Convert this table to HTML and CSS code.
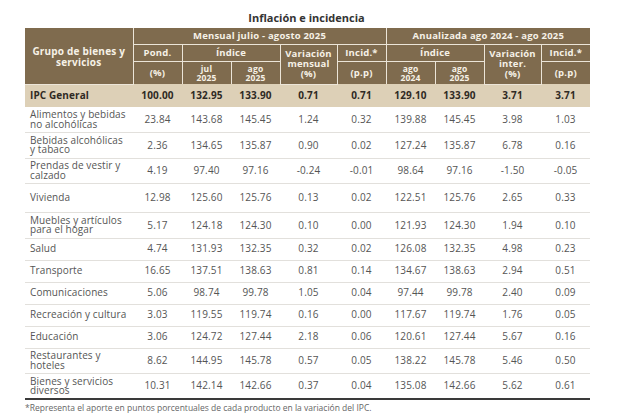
FILE: index.html
```html
<!DOCTYPE html>
<html lang="es">
<head>
<meta charset="utf-8">
<title>Inflación e incidencia</title>
<link rel="stylesheet" href="styles.css">
</head>
<body>
<div class="wrap">
  <h1 class="title">Inflación e incidencia</h1>
  <table class="ipc">
    <colgroup>
      <col class="c-name"><col class="c-n"><col class="c-n"><col class="c-n"><col class="c-w"><col class="c-n"><col class="c-n"><col class="c-n"><col class="c-w"><col class="c-n">
    </colgroup>
    <thead>
      <tr class="h1">
        <th rowspan="3" class="grp">Grupo de bienes y<br>servicios</th>
        <th colspan="5">Mensual julio - agosto 2025</th>
        <th colspan="4">Anualizada ago 2024 - ago 2025</th>
      </tr>
      <tr class="h2">
        <th>Pond.</th>
        <th colspan="2">Índice</th>
        <th rowspan="2" class="stack">Variación<br>mensual<br>(%)</th>
        <th>Incid.*</th>
        <th colspan="2">Índice</th>
        <th rowspan="2" class="stack">Variación<br>inter.<br>(%)</th>
        <th>Incid.*</th>
      </tr>
      <tr class="h3">
        <th>(%)</th>
        <th class="yr">jul<br>2025</th>
        <th class="yr">ago<br>2025</th>
        <th>(p.p)</th>
        <th class="yr">ago<br>2024</th>
        <th class="yr">ago<br>2025</th>
        <th>(p.p)</th>
      </tr>
    </thead>
    <tbody>
      <tr class="total"><td>IPC General</td><td>100.00</td><td>132.95</td><td>133.90</td><td>0.71</td><td>0.71</td><td>129.10</td><td>133.90</td><td>3.71</td><td>3.71</td></tr>
      <tr class="two"><td>Alimentos y bebidas<br>no alcohólicas</td><td>23.84</td><td>143.68</td><td>145.45</td><td>1.24</td><td>0.32</td><td>139.88</td><td>145.45</td><td>3.98</td><td>1.03</td></tr>
      <tr class="two"><td>Bebidas alcohólicas<br>y tabaco</td><td>2.36</td><td>134.65</td><td>135.87</td><td>0.90</td><td>0.02</td><td>127.24</td><td>135.87</td><td>6.78</td><td>0.16</td></tr>
      <tr class="two"><td>Prendas de vestir y<br>calzado</td><td>4.19</td><td>97.40</td><td>97.16</td><td>-0.24</td><td>-0.01</td><td>98.64</td><td>97.16</td><td>-1.50</td><td>-0.05</td></tr>
      <tr class="tall"><td>Vivienda</td><td>12.98</td><td>125.60</td><td>125.76</td><td>0.13</td><td>0.02</td><td>122.51</td><td>125.76</td><td>2.65</td><td>0.33</td></tr>
      <tr class="two"><td>Muebles y artículos<br>para el hogar</td><td>5.17</td><td>124.18</td><td>124.30</td><td>0.10</td><td>0.00</td><td>121.93</td><td>124.30</td><td>1.94</td><td>0.10</td></tr>
      <tr class="one"><td>Salud</td><td>4.74</td><td>131.93</td><td>132.35</td><td>0.32</td><td>0.02</td><td>126.08</td><td>132.35</td><td>4.98</td><td>0.23</td></tr>
      <tr class="one"><td>Transporte</td><td>16.65</td><td>137.51</td><td>138.63</td><td>0.81</td><td>0.14</td><td>134.67</td><td>138.63</td><td>2.94</td><td>0.51</td></tr>
      <tr class="one"><td>Comunicaciones</td><td>5.06</td><td>98.74</td><td>99.78</td><td>1.05</td><td>0.04</td><td>97.44</td><td>99.78</td><td>2.40</td><td>0.09</td></tr>
      <tr class="one"><td>Recreación y cultura</td><td>3.03</td><td>119.55</td><td>119.74</td><td>0.16</td><td>0.00</td><td>117.67</td><td>119.74</td><td>1.76</td><td>0.05</td></tr>
      <tr class="one"><td>Educación</td><td>3.06</td><td>124.72</td><td>127.44</td><td>2.18</td><td>0.06</td><td>120.61</td><td>127.44</td><td>5.67</td><td>0.16</td></tr>
      <tr class="two"><td>Restaurantes y<br>hoteles</td><td>8.62</td><td>144.95</td><td>145.78</td><td>0.57</td><td>0.05</td><td>138.22</td><td>145.78</td><td>5.46</td><td>0.50</td></tr>
      <tr class="two last"><td>Bienes y servicios<br>diversos</td><td>10.31</td><td>142.14</td><td>142.66</td><td>0.37</td><td>0.04</td><td>135.08</td><td>142.66</td><td>5.62</td><td>0.61</td></tr>
    </tbody>
  </table>
  <p class="note">*Representa el aporte en puntos porcentuales de cada producto en la variación del IPC.</p>
</div>
</body>
</html>
```
FILE: styles.css
```css
* { box-sizing: border-box; }
html, body { margin: 0; padding: 0; background: #ffffff; }
body { font-family: "Open Sans", "Noto Sans", sans-serif; color: #555; }

.wrap { width: 563px; margin-left: 25px; }

.title {
  margin: 11px 0 0;
  height: 17px;
  font-size: 11px;
  line-height: 14px;
  font-weight: 700;
  color: #333;
  text-align: center;
}

.ipc {
  width: 563px;
  table-layout: fixed;
  border-collapse: collapse;
}
.c-name { width: 108px; }
.c-n { width: 49px; }
.c-w { width: 57px; }

.ipc th {
  background: #7f6b4e;
  color: #f6f1e6;
  font-weight: 700;
  font-size: 9.5px;
  line-height: 11px;
  letter-spacing: 0.2px;
  padding: 0;
  text-align: center;
  border: 1.5px solid #ece5d8;
}
.ipc thead tr:first-child th { border-top: 0; }
.ipc th:first-child { border-left: 0; }
.ipc tr.h1 th:last-child, .ipc tr.h2 th:last-child, .ipc tr.h3 th:last-child { border-right: 0; }
.ipc tr.h1 { height: 16px; }
.ipc tr.h2 { height: 17px; }
.ipc tr.h3 { height: 23px; }
.ipc th.grp { font-size: 10px; line-height: 11px; padding-top: 3px; }
.ipc th.yr { font-size: 8.5px; line-height: 9px; padding-top: 1px; }
.ipc th.stack { line-height: 10px; }
.ipc thead tr.h3 th { border-bottom: 0; }

.ipc td {
  font-size: 10px;
  line-height: 9.5px;
  letter-spacing: 0.15px;
  text-align: center;
  padding: 0;
  color: #555;
  border-bottom: 1.5px solid #e2e0dc;
}
.ipc td:first-child { text-align: left; padding-left: 5px; letter-spacing: 0.1px; }

.ipc tr.total { height: 23px; background: #ddd0b7; }
.ipc tr.total td { color: #2f2a24; font-weight: 700; border-bottom: 0; }
.ipc tr.two { height: 25.5px; }
.ipc tr.tall { height: 29px; }
.ipc tr.one { height: 22px; }
.ipc tr.last td { border-bottom: 2px solid #3a3a3a; }

.note {
  margin: 3px 0 0;
  font-size: 8.5px;
  line-height: 10px;
  color: #666;
  white-space: nowrap;
}
```
